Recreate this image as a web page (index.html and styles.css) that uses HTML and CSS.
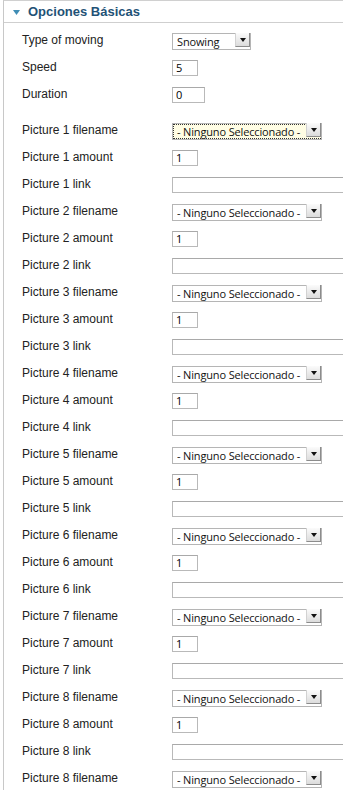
FILE: index.html
```html
<!DOCTYPE html>
<html lang="es">
<head>
<meta charset="utf-8">
<title>Opciones Básicas</title>
<link rel="stylesheet" href="styles.css">
</head>
<body>
<div class="panel">
  <div class="panel-head">
    <svg class="toggle" width="7" height="5" viewBox="0 0 7 5"><polygon points="0,0 7,0 3.5,5" fill="#3f8db5"/></svg>
    <span class="panel-title">Opciones Básicas</span>
  </div>
  <div class="params">
    <div class="row"><label class="lbl">Type of moving</label><span class="sel sel-short"><select class="sel-box"><option>Snowing</option></select><span class="sel-btn"><svg width="6" height="4" viewBox="0 0 6 4"><polygon points="0,0 6,0 3,4" fill="#111"/></svg></span></span></div>
    <div class="row"><label class="lbl">Speed</label><input class="txt txt-xs" type="text" value="5"></div>
    <div class="row"><label class="lbl">Duration</label><input class="txt txt-s" type="text" value="0"></div>

    <div class="spacer"></div>

    <div class="row"><label class="lbl">Picture 1 filename</label><span class="sel sel-long focused"><select class="sel-box"><option>- Ninguno Seleccionado -</option></select><span class="sel-btn"><svg width="6" height="4" viewBox="0 0 6 4"><polygon points="0,0 6,0 3,4" fill="#111"/></svg></span></span></div>
    <div class="row"><label class="lbl">Picture 1 amount</label><input class="txt txt-xs" type="text" value="1"></div>
    <div class="row"><label class="lbl">Picture 1 link</label><input class="txt txt-l" type="text" value=""></div>

    <div class="row"><label class="lbl">Picture 2 filename</label><span class="sel sel-long"><select class="sel-box"><option>- Ninguno Seleccionado -</option></select><span class="sel-btn"><svg width="6" height="4" viewBox="0 0 6 4"><polygon points="0,0 6,0 3,4" fill="#111"/></svg></span></span></div>
    <div class="row"><label class="lbl">Picture 2 amount</label><input class="txt txt-xs" type="text" value="1"></div>
    <div class="row"><label class="lbl">Picture 2 link</label><input class="txt txt-l" type="text" value=""></div>

    <div class="row"><label class="lbl">Picture 3 filename</label><span class="sel sel-long"><select class="sel-box"><option>- Ninguno Seleccionado -</option></select><span class="sel-btn"><svg width="6" height="4" viewBox="0 0 6 4"><polygon points="0,0 6,0 3,4" fill="#111"/></svg></span></span></div>
    <div class="row"><label class="lbl">Picture 3 amount</label><input class="txt txt-xs" type="text" value="1"></div>
    <div class="row"><label class="lbl">Picture 3 link</label><input class="txt txt-l" type="text" value=""></div>

    <div class="row"><label class="lbl">Picture 4 filename</label><span class="sel sel-long"><select class="sel-box"><option>- Ninguno Seleccionado -</option></select><span class="sel-btn"><svg width="6" height="4" viewBox="0 0 6 4"><polygon points="0,0 6,0 3,4" fill="#111"/></svg></span></span></div>
    <div class="row"><label class="lbl">Picture 4 amount</label><input class="txt txt-xs" type="text" value="1"></div>
    <div class="row"><label class="lbl">Picture 4 link</label><input class="txt txt-l" type="text" value=""></div>

    <div class="row"><label class="lbl">Picture 5 filename</label><span class="sel sel-long"><select class="sel-box"><option>- Ninguno Seleccionado -</option></select><span class="sel-btn"><svg width="6" height="4" viewBox="0 0 6 4"><polygon points="0,0 6,0 3,4" fill="#111"/></svg></span></span></div>
    <div class="row"><label class="lbl">Picture 5 amount</label><input class="txt txt-xs" type="text" value="1"></div>
    <div class="row"><label class="lbl">Picture 5 link</label><input class="txt txt-l" type="text" value=""></div>

    <div class="row"><label class="lbl">Picture 6 filename</label><span class="sel sel-long"><select class="sel-box"><option>- Ninguno Seleccionado -</option></select><span class="sel-btn"><svg width="6" height="4" viewBox="0 0 6 4"><polygon points="0,0 6,0 3,4" fill="#111"/></svg></span></span></div>
    <div class="row"><label class="lbl">Picture 6 amount</label><input class="txt txt-xs" type="text" value="1"></div>
    <div class="row"><label class="lbl">Picture 6 link</label><input class="txt txt-l" type="text" value=""></div>

    <div class="row"><label class="lbl">Picture 7 filename</label><span class="sel sel-long"><select class="sel-box"><option>- Ninguno Seleccionado -</option></select><span class="sel-btn"><svg width="6" height="4" viewBox="0 0 6 4"><polygon points="0,0 6,0 3,4" fill="#111"/></svg></span></span></div>
    <div class="row"><label class="lbl">Picture 7 amount</label><input class="txt txt-xs" type="text" value="1"></div>
    <div class="row"><label class="lbl">Picture 7 link</label><input class="txt txt-l" type="text" value=""></div>

    <div class="row"><label class="lbl">Picture 8 filename</label><span class="sel sel-long"><select class="sel-box"><option>- Ninguno Seleccionado -</option></select><span class="sel-btn"><svg width="6" height="4" viewBox="0 0 6 4"><polygon points="0,0 6,0 3,4" fill="#111"/></svg></span></span></div>
    <div class="row"><label class="lbl">Picture 8 amount</label><input class="txt txt-xs" type="text" value="1"></div>
    <div class="row"><label class="lbl">Picture 8 link</label><input class="txt txt-l" type="text" value=""></div>

    <div class="row"><label class="lbl">Picture 8 filename</label><span class="sel sel-long"><select class="sel-box"><option>- Ninguno Seleccionado -</option></select><span class="sel-btn"><svg width="6" height="4" viewBox="0 0 6 4"><polygon points="0,0 6,0 3,4" fill="#111"/></svg></span></span></div>
  </div>
</div>
</body>
</html>
```
FILE: styles.css
```css
html, body {
  margin: 0;
  padding: 0;
  background: #fff;
  overflow: hidden;
}
body {
  height: 790px;
  font-family: "Liberation Sans", Arial, sans-serif;
  color: #222;
}
.panel {
  margin-left: 3px;
  overflow: hidden;
  border-top: 1px solid #d0d0d0;
  border-left: 1px solid #c8c8c8;
}
.panel-head {
  height: 21px;
  display: flex;
  align-items: center;
  padding-left: 9px;
  border-bottom: 1px solid #cfcfcf;
}
.toggle {
  display: block;
  margin-right: 8px;
  margin-top: 1px;
}
.panel-title {
  font-size: 13px;
  font-weight: bold;
  color: #1f5276;
}
.params {
  padding: 4px 0 0 18px;
}
.row {
  display: grid;
  grid-template-columns: 150px auto;
  align-items: center;
  justify-items: start;
  height: 27px;
}
.spacer {
  height: 9px;
}
.lbl {
  font-size: 12px;
  color: #222;
  padding-bottom: 2px;
  white-space: nowrap;
}
.txt {
  box-sizing: border-box;
  height: 16px;
  margin: 0;
  padding: 0 0 0 3px;
  border: 1px solid #b9b9b9;
  border-top-color: #a9a9a9;
  background: #fff;
  font-family: "Open Sans", "DejaVu Sans", sans-serif;
  font-size: 11px;
  color: #000;
  outline: none;
}
.txt-xs { width: 26px; }
.txt-s { width: 33px; }
.txt-l { width: 200px; }
.sel {
  position: relative;
  display: block;
  box-sizing: border-box;
  height: 17px;
}
.sel-short { width: 79px; }
.sel-long { width: 150px; }
.sel-box {
  appearance: none;
  -webkit-appearance: none;
  box-sizing: border-box;
  width: 100%;
  height: 17px;
  margin: 0;
  padding: 0 0 0 4px;
  border: 1px solid #b5b5b5;
  border-radius: 0;
  background: #fff;
  font-family: "Open Sans", "DejaVu Sans", sans-serif;
  font-size: 11px;
  letter-spacing: -0.15px;
  line-height: 15px;
  color: #111;
  outline: none;
}
.focused .sel-box {
  background: #fffde4;
  outline: 1px dotted #333;
  outline-offset: -2px;
}
.sel-btn {
  position: absolute;
  top: 1px;
  right: 1px;
  width: 15px;
  height: 14px;
  display: flex;
  align-items: center;
  justify-content: center;
  border-left: 1px solid #d2d2d2;
  border-right: 1px solid #8c8c8c;
  border-bottom: 1px solid #8c8c8c;
  box-sizing: border-box;
  background: linear-gradient(#fbfbfb, #dcdcdc);
}
```
